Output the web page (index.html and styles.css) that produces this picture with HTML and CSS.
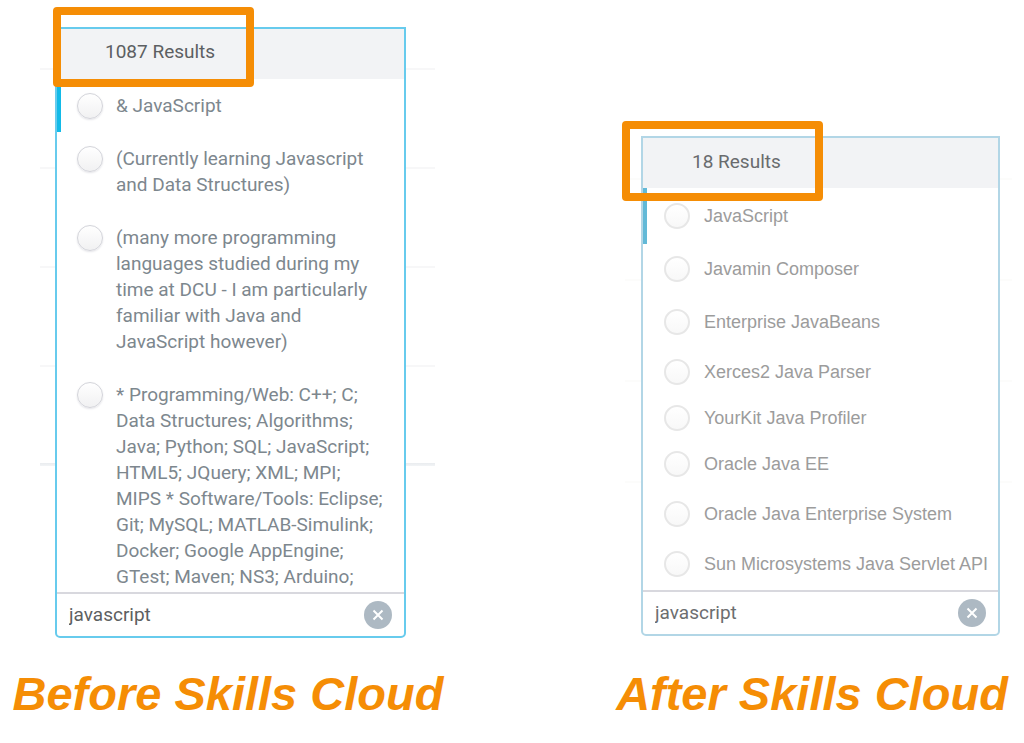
FILE: index.html
```html
<!DOCTYPE html>
<html lang="en">
<head>
    <meta charset="UTF-8">
    <meta name="viewport" content="width=device-width, initial-scale=1.0">
    <title>Skills Cloud</title>
    <link rel="stylesheet" href="styles.css">
</head>
<body>
    <main class="comparison">
        <section class="side before">
            <div class="backdrop">
                <form class="panel">
                    <div class="results">1087 Results<span class="highlight"></span></div>
                    <div class="options">
                        <label class="option active"><input type="radio" name="skill"><span>&amp; JavaScript</span></label>
                        <label class="option"><input type="radio" name="skill"><span>(Currently learning Javascript<br>and Data Structures)</span></label>
                        <label class="option"><input type="radio" name="skill"><span>(many more programming<br>languages studied during my<br>time at DCU - I am particularly<br>familiar with Java and<br>JavaScript however)</span></label>
                        <label class="option"><input type="radio" name="skill"><span>* Programming/Web: C++; C;<br>Data Structures; Algorithms;<br>Java; Python; SQL; JavaScript;<br>HTML5; JQuery; XML; MPI;<br>MIPS * Software/Tools: Eclipse;<br>Git; MySQL; MATLAB-Simulink;<br>Docker; Google AppEngine;<br>GTest; Maven; NS3; Arduino;</span></label>
                    </div>
                    <div class="search">
                        <input type="text" value="javascript" aria-label="Search skills">
                        <button type="button" class="clear" aria-label="Clear search">
                            <svg viewBox="0 0 28 28"><path d="M9.500 9.500L18.500 18.500M18.500 9.500L9.500 18.500"/></svg>
                        </button>
                    </div>
                </form>
            </div>
            <h2>Before Skills Cloud</h2>
        </section>

        <section class="side after">
            <div class="backdrop">
                <form class="panel">
                    <div class="results">18 Results<span class="highlight"></span></div>
                    <div class="options">
                        <label class="option active roomy"><input type="radio" name="skill"><span>JavaScript</span></label>
                        <label class="option roomy"><input type="radio" name="skill"><span>Javamin Composer</span></label>
                        <label class="option"><input type="radio" name="skill"><span>Enterprise JavaBeans</span></label>
                        <label class="option tight"><input type="radio" name="skill"><span>Xerces2 Java Parser</span></label>
                        <label class="option tight"><input type="radio" name="skill"><span>YourKit Java Profiler</span></label>
                        <label class="option"><input type="radio" name="skill"><span>Oracle Java EE</span></label>
                        <label class="option"><input type="radio" name="skill"><span>Oracle Java Enterprise System</span></label>
                        <label class="option"><input type="radio" name="skill"><span>Sun Microsystems Java Servlet API</span></label>
                    </div>
                    <div class="search">
                        <input type="text" value="javascript" aria-label="Search skills">
                        <button type="button" class="clear" aria-label="Clear search">
                            <svg viewBox="0 0 28 28"><path d="M9.500 9.500L18.500 18.500M18.500 9.500L9.500 18.500"/></svg>
                        </button>
                    </div>
                </form>
            </div>
            <h2>After Skills Cloud</h2>
        </section>
    </main>
</body>
</html>
```
FILE: styles.css
```css
* {
    box-sizing: border-box;
}
body {
    margin: 0;
    background-color: #fff;
    font-family: Roboto, sans-serif;
    font-size: 19px;
    line-height: 26px;
    color: #7d878e;
}
.comparison {
    display: flex;
    justify-content: space-between;
}
.side {
    display: flex;
    flex-direction: column;
}
.before {
    padding: 27px 12px 0;
}
.after {
    padding: 136px 12px 0 0;
}
/* faint table rows behind the open dropdown */
.before .backdrop {
    padding: 0 38px 0 43px;
    background:
        linear-gradient(#e9ecef, #f2f4f6) 28px 436px / 395px 3px no-repeat,
        repeating-linear-gradient(transparent 0 41px, #f7f7f8 41px 43px, transparent 43px 99px) 28px 0 / 395px 430px no-repeat;
}
.after .backdrop {
    padding: 0 12px 0 29px;
    background: repeating-linear-gradient(transparent 0 42px, #fcfcfb 42px 44px, transparent 44px 101px) 13px 0 / 387px 430px no-repeat;
}
.panel {
    width: 351px;
    border: 2px solid #67cbed;
    border-radius: 0 0 5px 5px;
    background-color: #fff;
}
.after .panel {
    width: 359px;
    border-color: #b2d6e6;
}
.results {
    position: relative;
    padding: 10px 48px 14px;
    background-color: #f2f3f5;
    color: #5c5f62;
}
.after .results {
    padding: 11px 49px 13px;
    color: #696b6d;
}
.highlight {
    position: absolute;
    top: -22px;
    left: -4px;
    width: 201px;
    height: 80px;
    border: 8px solid #f58d05;
    border-radius: 4px;
    z-index: 1;
}
.after .highlight {
    top: -17px;
    left: -21px;
}
.options {
    height: 513px;
    overflow: hidden;
}
.option {
    position: relative;
    display: flex;
    align-items: flex-start;
    gap: 13px;
    padding: 14px 8px 13px 20px;
}
.option.active::before {
    content: "";
    position: absolute;
    top: 0;
    bottom: 0;
    left: 0;
    width: 4px;
    background-color: #12bae8;
}
.option input {
    appearance: none;
    flex: none;
    width: 26px;
    height: 26px;
    margin: 0;
    border: 1px solid #d3d4da;
    border-radius: 50%;
    background: linear-gradient(#fff, #f1f1f2);
    box-shadow: 0 1px 2px #e4e4e8;
}
.after .options {
    height: 402px;
}
.after .option {
    gap: 14px;
    padding: 0 8px 24px 21px;
    font-family: "Liberation Sans", sans-serif;
    font-size: 18px;
    color: #9c9c9c;
}
.after .option.roomy {
    padding-bottom: 27px;
}
.after .option.tight {
    padding-bottom: 20px;
}
.after .option.active {
    padding-top: 15px;
}
.after .option.active::before {
    background-color: #62b9d7;
    bottom: 12px;
}
.after .option input {
    border: 2px solid #e7e7e7;
    background: linear-gradient(#fff, #f8f8f8);
    box-shadow: none;
}
.search {
    display: flex;
    align-items: center;
    justify-content: space-between;
    height: 44px;
    padding: 0 12px;
    border-top: 2px solid #d8d8de;
}
.search input {
    flex: 1;
    min-width: 0;
    padding: 0;
    border: 0;
    outline: 0;
    background: none;
    font: inherit;
    color: #5d5f61;
}
.after .search input {
    color: #6c6e70;
}
.clear {
    width: 28px;
    height: 28px;
    padding: 0;
    border: 0;
    border-radius: 50%;
    background-color: #adb9c3;
}
.clear svg {
    display: block;
    fill: none;
    stroke: #fff;
    stroke-width: 2;
}
h2 {
    margin: 28px 0 0;
    font-family: "Liberation Sans", sans-serif;
    font-size: 47px;
    font-style: italic;
    line-height: 56px;
    white-space: nowrap;
    text-align: center;
    color: #f58d05;
}
.after h2 {
    margin-top: 30px;
}
```
